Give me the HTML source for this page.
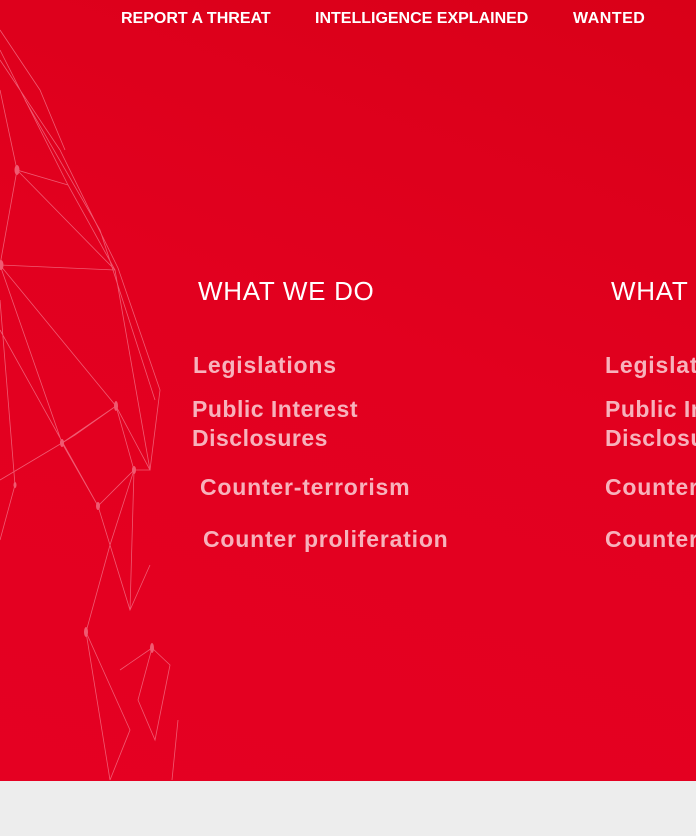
<!DOCTYPE html>
<html><head><meta charset="utf-8"><style>
*{margin:0;padding:0;box-sizing:border-box}
html,body{width:696px;height:836px;overflow:hidden;background:#ededed;font-family:"Liberation Sans",sans-serif}
.hero{position:absolute;left:0;top:0;width:696px;height:781px;background:linear-gradient(200deg,#d90018 0%,#e2001f 45%,#e50022 100%);overflow:hidden}
.nav{position:absolute;top:10px;color:#fff;font-size:16px;font-weight:bold;letter-spacing:0px;white-space:nowrap}
.h{position:absolute;color:#fff;font-size:26px;white-space:nowrap;letter-spacing:0.7px}
.i{position:absolute;color:#f7b2bc;font-size:23px;font-weight:bold;white-space:nowrap;line-height:29px;letter-spacing:0.8px}
svg{position:absolute;left:0;top:0}
</style></head><body>
<div class="hero">
<svg width="200" height="781" stroke="#f26a80" stroke-width="0.8" fill="none" opacity="0.85">
<path d="M0 50 L68 185 L115 270 L150 470 L160 390 L118 268 L60 150 L0 60"/>
<path d="M0 90 L17 170 L68 185 M17 170 L115 270 M17 170 L0 265 L115 270 M0 265 L62 443 L116 406 L150 470 L134 470 L98 506 L62 443 M0 265 L116 406 L134 470 L130 610 L110 545 L98 506 M134 470 L110 545 M0 480 L62 443 L75 435 L116 406 M15 485 L0 540 M98 506 L130 610 L150 565 M110 545 L86 632 L130 730 L110 780 M86 632 L110 780 M152 648 L170 665 L155 740 L138 700 L152 648 L120 670 M178 720 L172 780 M0 300 L15 485 M0 330 L98 506"/>
<path d="M0 30 L40 90 L65 150 M25 100 L100 230 L155 400"/>
<g fill="#f26a80" stroke="none"><ellipse cx="17" cy="170" rx="2.5" ry="5"/><ellipse cx="1" cy="265" rx="2.5" ry="5"/><ellipse cx="116" cy="406" rx="2" ry="5"/><ellipse cx="62" cy="443" rx="2" ry="4"/><ellipse cx="134" cy="470" rx="2" ry="4"/><ellipse cx="98" cy="506" rx="2" ry="4"/><ellipse cx="86" cy="632" rx="2" ry="5"/><ellipse cx="152" cy="648" rx="2" ry="5"/><ellipse cx="15" cy="485" rx="1.5" ry="3"/></g>
</svg>
<div class="nav" style="left:121px">REPORT A THREAT</div>
<div class="nav" style="left:315px">INTELLIGENCE EXPLAINED</div>
<div class="nav" style="left:573px;letter-spacing:0.5px">WANTED</div>
<div class="h" style="left:198px;top:276px">WHAT WE DO</div>
<div class="h" style="left:611px;top:276px">WHAT WE DO</div>
<div class="i" style="left:193px;top:351px">Legislations</div>
<div class="i" style="left:192px;top:395px;letter-spacing:0.5px">Public Interest<br>Disclosures</div>
<div class="i" style="left:200px;top:473px">Counter-terrorism</div>
<div class="i" style="left:203px;top:525px">Counter proliferation</div>
<div class="i" style="left:605px;top:351px">Legislations</div>
<div class="i" style="left:605px;top:395px;letter-spacing:0.5px">Public Interest<br>Disclosures</div>
<div class="i" style="left:605px;top:473px">Counter-terrorism</div>
<div class="i" style="left:605px;top:525px">Counter proliferation</div>
</div>
</body></html>
